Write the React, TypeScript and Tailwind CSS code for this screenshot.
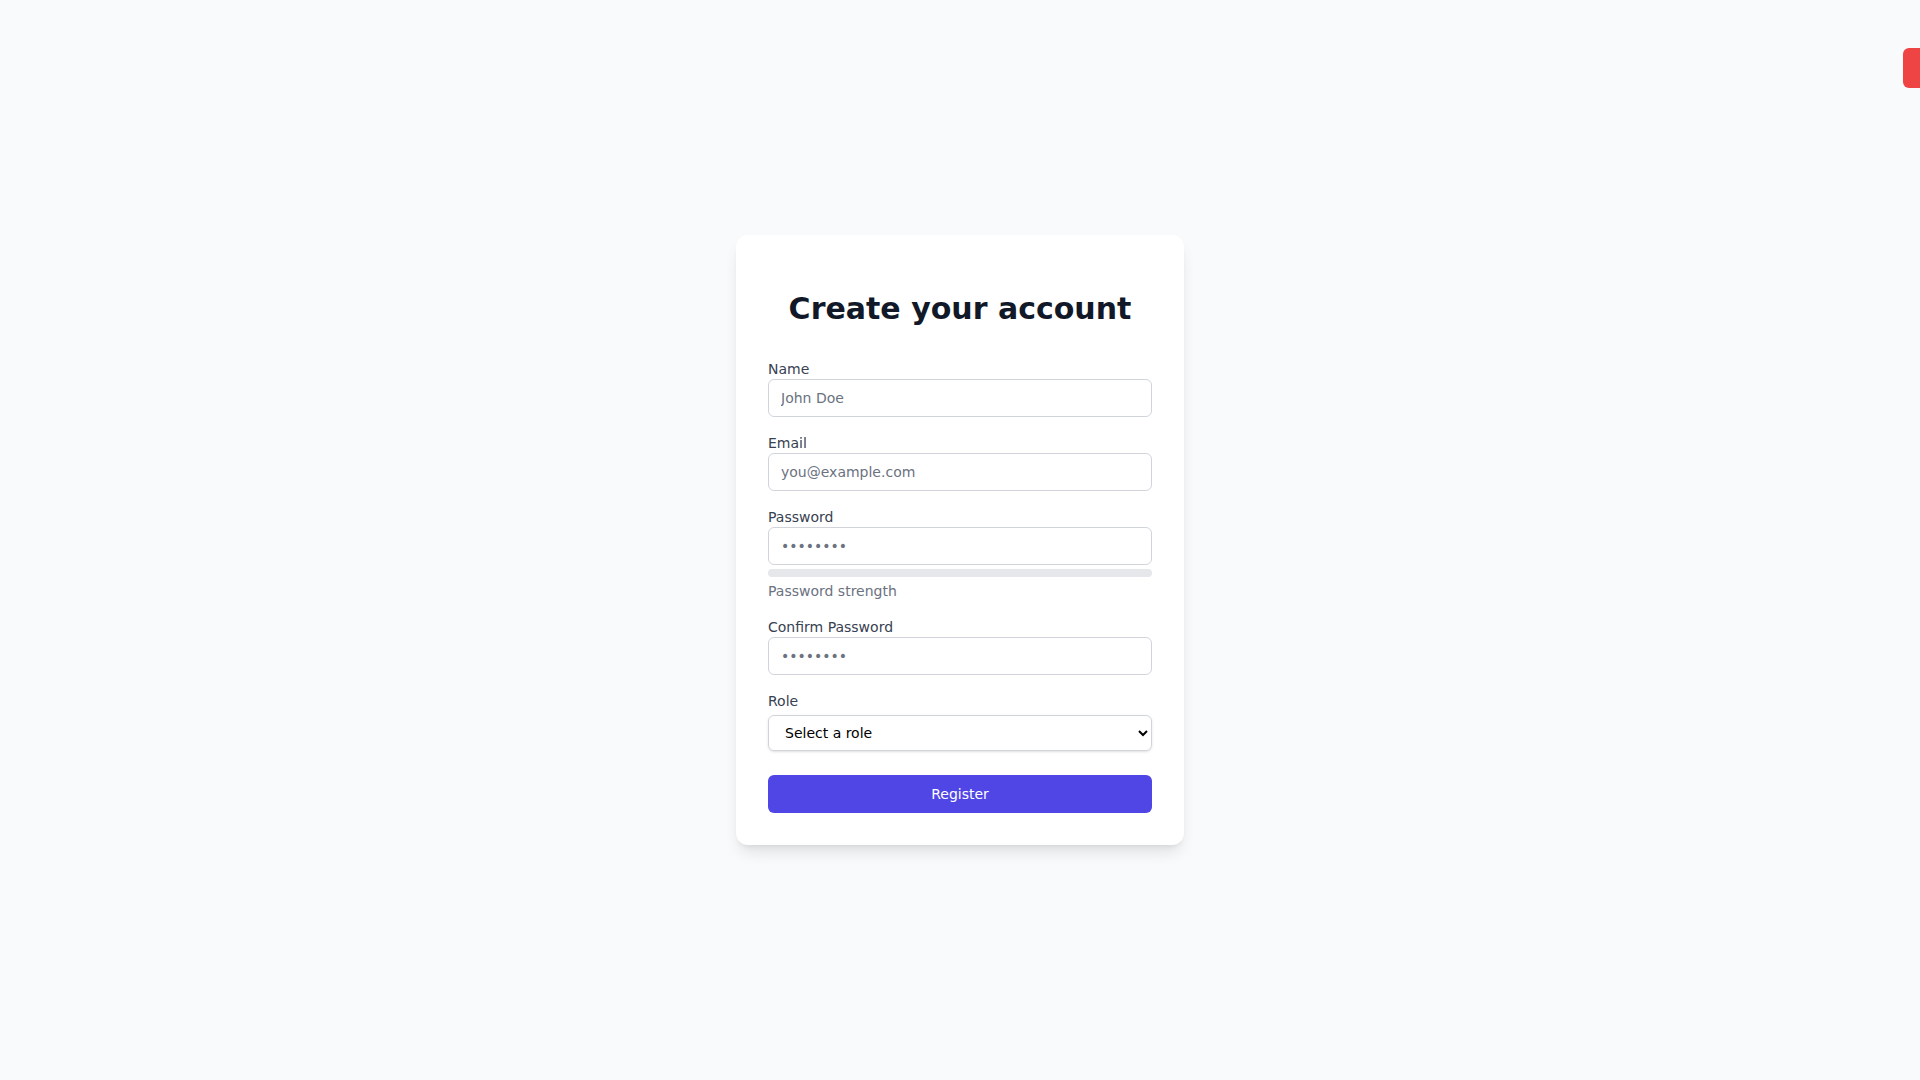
import { useState } from 'react';

const inputClass =
  'block w-full rounded-md border border-[#d1d5db] px-3 py-2 text-sm text-[#111827] placeholder:text-[#6b7280] focus:outline-none';

export default function App() {
  const [password, setPassword] = useState('');

  return (
    <div
      className="relative flex min-h-screen items-center justify-center overflow-hidden bg-[#f9fafb]"
      style={{ fontFamily: '"DejaVu Sans", sans-serif' }}
    >
      <div className="fixed right-0 top-12 h-10 w-[17px] rounded-l-md bg-[#ef4444]" />

      <div className="w-full max-w-md rounded-xl bg-white p-8 shadow-lg">
        <h2 className="mt-6 mb-8 text-center text-3xl font-bold text-[#111827]">Create your account</h2>
        <form className="space-y-4" onSubmit={(e) => e.preventDefault()}>
          <div>
            <label className="block text-sm text-[#374151]">Name</label>
            <input type="text" placeholder="John Doe" className={inputClass} />
          </div>
          <div>
            <label className="block text-sm text-[#374151]">Email</label>
            <input type="email" placeholder="you@example.com" className={inputClass} />
          </div>
          <div>
            <label className="block text-sm text-[#374151]">Password</label>
            <input
              type="password"
              placeholder="••••••••"
              value={password}
              onChange={(e) => setPassword(e.target.value)}
              className={inputClass}
            />
            <div className="mt-1 h-2 w-full rounded-full bg-[#e5e7eb]" />
            <p className="mt-1 text-sm text-[#6b7280]">Password strength</p>
          </div>
          <div>
            <label className="block text-sm text-[#374151]">Confirm Password</label>
            <input type="password" placeholder="••••••••" className={inputClass} />
          </div>
          <div>
            <label className="block text-sm text-[#374151]">Role</label>
            <select
              defaultValue=""
              className="mt-1 block w-full rounded-md border border-[#d1d5db] px-3 py-2 text-sm text-black shadow-sm"
            >
              <option value="" disabled>
                Select a role
              </option>
              <option value="user">User</option>
              <option value="admin">Admin</option>
            </select>
          </div>
          <button
            type="submit"
            className="mt-6 block w-full rounded-md border border-transparent bg-[#4f46e5] px-4 py-2 text-sm text-white"
          >
            Register
          </button>
        </form>
      </div>
    </div>
  );
}
